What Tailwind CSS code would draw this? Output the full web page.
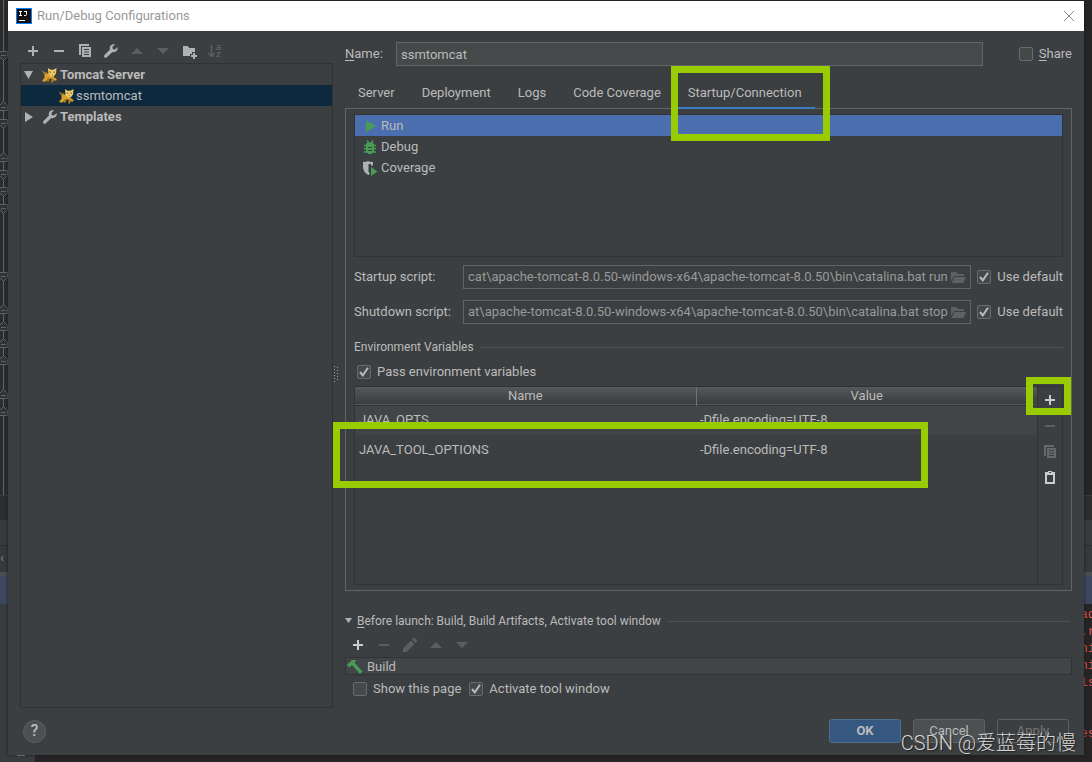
<!DOCTYPE html>
<html lang="en">
<head>
    <meta charset="UTF-8">
    <meta name="viewport" content="width=device-width, initial-scale=1.0">
    <title>Run/Debug Configurations</title>
    <script src="https://cdn.jsdelivr.net/npm/@tailwindcss/browser@4"></script>
</head>
<body class="bg-[#2b2b2b] text-[#bbbbbb] text-[13px] leading-5 font-[Roboto,'Noto_Sans_CJK_SC',sans-serif]">
    <!-- Shared icons -->
    <svg class="hidden">
        <symbol id="plus" viewBox="0 0 16 16"><path fill="currentColor" d="M7 3h2v4h4v2H9v4H7V9H3V7h4z"/></symbol>
        <symbol id="minus" viewBox="0 0 16 16"><path fill="currentColor" d="M3 7h10v2H3z"/></symbol>
        <symbol id="copy" viewBox="0 0 16 16"><path fill="currentColor" d="M2 1h10v2H4v9H2z"/><path fill="currentColor" fill-rule="evenodd" d="M5 4h9v10H5zM7 6v1h5V6zM7 8.500v1h5v-1zM7 11v1h5v-1z"/></symbol>
        <symbol id="wrench" viewBox="0 0 16 16"><path fill="currentColor" d="M14.600 3.900 12 6.500 9.800 6.100 9.400 4 12 1.400C10.300.900 8.400 1.300 7.400 2.800 6.600 4 6.600 5.300 7 6.500L1.500 12a1.600 1.600 0 0 0 0 2.300 1.600 1.600 0 0 0 2.300 0L9.400 8.900c1.400.500 2.900.200 4-.800 1.200-1.100 1.600-2.700 1.200-4.200z"/></symbol>
        <symbol id="up" viewBox="0 0 16 16"><path fill="currentColor" d="M2 11 8 5l6 6z"/></symbol>
        <symbol id="down" viewBox="0 0 16 16"><path fill="currentColor" d="M2 5h12l-6 6z"/></symbol>
        <symbol id="paste" viewBox="0 0 16 16"><path fill="currentColor" fill-rule="evenodd" d="M3 2h3V1h4v1h3v12H3zM5 5v7h6V5zM7 2v1h2V2z"/></symbol>
        <symbol id="folder" viewBox="0 0 16 16"><path fill="currentColor" d="M1 3h5l2 2h6v2H4L1 12z"/><path fill="currentColor" d="M4.500 8H16l-2.500 6H1.500z"/></symbol>
        <symbol id="check" viewBox="0 0 14 14"><path fill="none" stroke="#bbbbbb" stroke-width="2" d="M3 7l2.800 3.300L11 2.800"/></symbol>
        <symbol id="cat" viewBox="0 0 16 16">
            <path fill="none" stroke="#a8791d" stroke-width="1.300" d="M5 6H2L.700 4"/>
            <path fill="#d9a02c" d="M2.500 6.500 8 6.500l3 3 3.500 2.500v1.500h-3L9 11.500 6 12l-2.500 2.500H.500V13l2-2z"/>
            <path fill="#b5801d" d="M5.500 11h2L7 14.500H4.800zM10 11l2 1-1 3.500H9z"/>
            <path fill="#f0cc6b" d="M6 1 8.500 2.700h3L14.500 1l-.500 5.500-2.300 3h-2.500L6.500 7z"/>
            <path fill="#7a5312" d="M7.800 4.500h1.300v1.200H7.800zM11.500 4.500h1.300v1.200h-1.300zM9.600 7.500h1.600l-.800.900z"/>
        </symbol>
        <symbol id="fold-down" viewBox="0 0 9 11"><path fill="#313335" stroke="#606366" d="M-.500.500h8v5l-4 4-4-4z"/><path stroke="#606366" d="M1 4.500h5"/></symbol>
        <symbol id="fold-up" viewBox="0 0 9 11"><path fill="#313335" stroke="#606366" d="M-.500 9.500h8v-5l-4-4-4 4z"/><path stroke="#606366" d="M1 6.500h5"/></symbol>
    </svg>

    <div class="relative min-h-screen flex flex-col overflow-hidden">
        <!-- IDE window behind the dialog -->
        <div class="absolute inset-0 flex flex-col" aria-hidden="true">
            <div class="h-[495px] flex justify-between">
                <svg class="w-2 h-full bg-[#2b2c2d]" fill="none">
                    <path stroke="#606366" d="M3.500 0v495"/>
                    <use href="#fold-down" y="51" width="9" height="11"/>
                    <use href="#fold-up" y="101" width="9" height="11"/>
                    <use href="#fold-down" y="119" width="9" height="11"/>
                    <use href="#fold-up" y="152" width="9" height="11"/>
                    <use href="#fold-down" y="170" width="9" height="11"/>
                    <use href="#fold-down" y="187" width="9" height="11"/>
                    <use href="#fold-down" y="204" width="9" height="11"/>
                    <use href="#fold-down" y="272" width="9" height="11"/>
                    <use href="#fold-up" y="304" width="9" height="11"/>
                    <use href="#fold-up" y="321" width="9" height="11"/>
                    <use href="#fold-up" y="338" width="9" height="11"/>
                    <use href="#fold-up" y="355" width="9" height="11"/>
                    <use href="#fold-up" y="389" width="9" height="11"/>
                    <use href="#fold-up" y="406" width="9" height="11"/>
                </svg>
                <div class="w-2 bg-[#252525]"></div>
            </div>
            <div class="h-[25px] bg-[#2d2d2d] border-t border-[#3a3a3a]"></div>
            <div class="h-[25px] bg-[#383b3d]"></div>
            <div class="h-[27px] bg-[#36383a] border-t border-[#2b2b2b] text-[#888888] leading-6">‹</div>
            <div class="h-1 bg-[#4a4d4f]"></div>
            <div class="h-7 bg-[#3d4860]"></div>
            <div class="flex-1 flex justify-between bg-[#262424]">
                <div class="w-[35px] bg-[#393c3e] flex items-end justify-end pb-1.5 pr-2.5"><div class="w-2 h-2 bg-[#999999]"></div></div>
                <div class="flex-1 self-end pl-[15px] pb-1 text-xs leading-4 text-[#999999]">快到</div>
                <pre class="w-3 overflow-hidden text-[#d9534f] text-[13px] leading-[17px] pt-0.5 font-['Liberation_Mono',monospace]">ad
.r
ni
ni
is


es</pre>
            </div>
        </div>

        <!-- Dialog -->
        <div class="relative flex-1 mx-2 mt-px mb-[7px] flex flex-col bg-[#3c3f41] shadow-[0_0_3px_#1b1b1b]">
            <header class="h-[30px] bg-white flex items-center pl-2 pr-[9px]">
                <svg class="size-4" viewBox="0 0 16 16">
                    <path fill="#087cfa" d="M0 0h16v16H0z"/>
                    <path fill="#111111" d="M1 1h14v14H1z"/>
                    <path fill="none" stroke="#ffffff" d="M3 3.500h3M4.500 3v5M3 7.500h3M8 3.500h3M10.500 3v3.500q0 1-1 1H8M3 12.500h6"/>
                </svg>
                <h1 class="ml-[5px] flex-1 text-[#999999]">Run/Debug Configurations</h1>
                <button class="size-3" aria-label="Close">
                    <svg class="size-3" viewBox="0 0 12 12" fill="none" stroke="#888888"><path d="M1 1l10 10M11 1 1 11"/></svg>
                </button>
            </header>

            <main class="flex-1 flex pl-3 pr-3">
                <!-- Configuration tree -->
                <section class="w-[313px] shrink-0 flex flex-col pt-2">
                    <div class="h-6 flex">
                        <button class="w-[26px] grid place-items-center text-[#afb1b3]" aria-label="Add"><svg class="size-4"><use href="#plus"/></svg></button>
                        <button class="w-[26px] grid place-items-center text-[#afb1b3]" aria-label="Remove"><svg class="size-4"><use href="#minus"/></svg></button>
                        <button class="w-[26px] grid place-items-center text-[#afb1b3]" aria-label="Copy"><svg class="size-4"><use href="#copy"/></svg></button>
                        <button class="w-[26px] grid place-items-center text-[#afb1b3]" aria-label="Edit templates"><svg class="size-4"><use href="#wrench"/></svg></button>
                        <button class="w-[26px] grid place-items-center text-[#5b5d5f]" aria-label="Move up" disabled><svg class="size-4"><use href="#up"/></svg></button>
                        <button class="w-[26px] grid place-items-center text-[#5b5d5f]" aria-label="Move down" disabled><svg class="size-4"><use href="#down"/></svg></button>
                        <button class="w-[26px] grid place-items-center text-[#afb1b3]" aria-label="New folder">
                            <svg class="size-4" viewBox="0 0 16 16"><path fill="currentColor" d="M2 3h4.500l2 2H14v4h-3v2H9v2H2z"/><path fill="currentColor" d="M12 10h2v2h2v2h-2v2h-2v-2h-2v-2h2z"/></svg>
                        </button>
                        <button class="w-[26px] grid place-items-center text-[#5b5d5f]" aria-label="Sort" disabled>
                            <svg class="size-4" viewBox="0 0 16 16" fill="none" stroke="currentColor"><path stroke-width="1.500" d="M4.500 2v11M1.500 10l3 3.500 3-3.500"/><path stroke-width="1.200" d="M9.500 2.500h3.500v4H10v-2h3M9.500 9.500h3.500l-3 4h3.500"/></svg>
                        </button>
                    </div>
                    <ul class="flex-1 border border-[#323232]">
                        <li class="h-[21px] flex items-center font-bold pl-0.5">
                            <svg class="w-3 h-3 mr-[7px] text-[#afb1b3]" viewBox="0 0 12 12"><path fill="currentColor" d="M1 2h9l-4.500 8z"/></svg>
                            <svg class="size-4 mr-0.5"><use href="#cat"/></svg>Tomcat Server
                        </li>
                        <li class="h-[21px] flex items-center bg-[#0d293e] pl-[38px]">
                            <svg class="size-4 mr-px"><use href="#cat"/></svg>ssmtomcat
                        </li>
                        <li class="h-[21px] flex items-center font-bold pl-0.5">
                            <svg class="w-3 h-3 mr-[7px] text-[#afb1b3]" viewBox="0 0 12 12"><path fill="currentColor" d="M2 1l8 5-8 5z"/></svg>
                            <svg class="size-4 mr-0.5 text-[#afb1b3]"><use href="#wrench"/></svg>Templates
                        </li>
                    </ul>
                </section>

                <!-- Splitter -->
                <div class="w-3 shrink-0 flex items-center pl-px pt-2">
                    <svg class="w-1 h-4" viewBox="0 0 4 16" fill="none" stroke="#a0a0a0"><path stroke-dasharray="1 2" d="M.500 0v16M3.500 1v15"/></svg>
                </div>

                <!-- Settings -->
                <section class="flex-1 min-w-0 flex flex-col pt-[11px] pb-[9px]">
                    <div class="h-6 flex items-center">
                        <label for="name" class="w-[51px]"><span class="underline underline-offset-2">N</span>ame:</label>
                        <input id="name" type="text" value="ssmtomcat" class="flex-1 min-w-0 h-6 px-1 bg-[#45494a] border border-[#646464] mr-9">
                        <label class="flex items-center gap-1.5">
                            <input type="checkbox" class="appearance-none size-3.5 rounded-xs border border-[#6b6b6b] bg-[#43494a]">
                            <span><span class="underline underline-offset-2">S</span>hare</span>
                        </label>
                    </div>

                    <nav class="mt-[11px] h-8 -mb-px flex gap-px relative z-10">
                        <button class="px-[13px] pt-0.5 border-b-2 border-transparent">Server</button>
                        <button class="px-[13px] pt-0.5 border-b-2 border-transparent">Deployment</button>
                        <button class="px-[13px] pt-0.5 border-b-2 border-transparent">Logs</button>
                        <button class="px-[13px] pt-0.5 border-b-2 border-transparent">Code Coverage</button>
                        <button class="relative px-[13px] pt-0.5 border-b-2 border-[#3e7dc4]">
                            Startup/Connection
                            <span class="absolute -left-1 -top-[11px] w-[159px] h-[75px] border-7 border-[#99cc00] pointer-events-none"></span>
                        </button>
                    </nav>

                    <div class="flex-1 flex flex-col border border-[#646464] px-2 py-[5px]">
                        <ul class="h-[143px] border border-[#323232]">
                            <li class="h-[21px] flex items-center gap-[3px] pl-[7px] bg-[#4b6eaf]">
                                <svg class="size-4" viewBox="0 0 16 16"><path fill="#499c54" d="M4 2.500 14 8 4 14z"/></svg>Run
                            </li>
                            <li class="h-[21px] flex items-center gap-[3px] pl-[7px]">
                                <svg class="size-4" viewBox="0 0 16 16"><path fill="none" stroke="#499c54" stroke-width="1.300" d="M5 1.500l2 2.500M11 1.500 9 4M2 6.500h12M2 9.500h12M2 13h12"/><path fill="#499c54" d="M5 3.500h6l1 2V12l-2.500 3h-3L4 12V5.500z"/><path stroke="#3c3f41" d="M6 8.500h4M6 11.500h4"/></svg>Debug
                            </li>
                            <li class="h-[21px] flex items-center gap-[3px] pl-[7px]">
                                <svg class="size-4" viewBox="0 0 16 16"><path fill="#afb1b3" fill-rule="evenodd" d="M1 2q3.500 0 5-1 1.500 1 5 1v3.500L9 5.500V4H6.500v8L8 13.500 6.500 15Q1 12 1 7z"/><path fill="#499c54" d="M9 7l6.500 4.500L9 16z"/></svg>Coverage
                            </li>
                        </ul>

                        <div class="mt-2 h-6 flex items-center">
                            <label for="startup" class="w-[109px]">Startup script:</label>
                            <div class="flex-1 min-w-0 h-6 flex items-center border border-[#646464] px-1">
                                <input id="startup" type="text" disabled class="flex-1 min-w-0 text-[#999999]" value="cat\apache-tomcat-8.0.50-windows-x64\apache-tomcat-8.0.50\bin\catalina.bat run">
                                <button class="text-[#5e6163]" aria-label="Browse" disabled><svg class="size-4"><use href="#folder"/></svg></button>
                            </div>
                            <label class="relative flex items-center gap-1.5 ml-1.5">
                                <input type="checkbox" checked class="appearance-none size-3.5 rounded-xs border border-[#6b6b6b] bg-[#43494a]">
                                <svg class="absolute left-0 size-3.5"><use href="#check"/></svg>
                                Use default
                            </label>
                        </div>
                        <div class="mt-[11px] h-6 flex items-center">
                            <label for="shutdown" class="w-[109px]">Shutdown script:</label>
                            <div class="flex-1 min-w-0 h-6 flex items-center border border-[#646464] px-1">
                                <input id="shutdown" type="text" disabled class="flex-1 min-w-0 text-[#999999]" value="at\apache-tomcat-8.0.50-windows-x64\apache-tomcat-8.0.50\bin\catalina.bat stop">
                                <button class="text-[#5e6163]" aria-label="Browse" disabled><svg class="size-4"><use href="#folder"/></svg></button>
                            </div>
                            <label class="relative flex items-center gap-1.5 ml-1.5">
                                <input type="checkbox" checked class="appearance-none size-3.5 rounded-xs border border-[#6b6b6b] bg-[#43494a]">
                                <svg class="absolute left-0 size-3.5"><use href="#check"/></svg>
                                Use default
                            </label>
                        </div>

                        <div class="mt-[15px] h-4 flex items-center gap-1.5 text-xs">
                            <h2>Environment Variables</h2>
                            <div class="flex-1 h-px bg-[#515151]"></div>
                        </div>
                        <label class="relative mt-[7px] h-5 flex items-center gap-1.5 pl-[3px]">
                            <input type="checkbox" checked class="appearance-none size-3.5 rounded-xs border border-[#6b6b6b] bg-[#43494a]">
                            <svg class="absolute left-[3px] size-3.5"><use href="#check"/></svg>
                            Pass environment variables
                        </label>

                        <div class="relative mt-1 flex-1 flex border border-[#323232]">
                            <div class="flex-1 min-w-0">
                                <table class="w-full table-fixed border-collapse">
                                    <thead>
                                        <tr class="h-[18px] bg-linear-to-b from-[#55595b] to-[#3a3d3f] border-b border-[#323232] leading-4">
                                            <th class="font-normal p-0 border-r border-[#707374]">Name</th>
                                            <th class="font-normal p-0">Value</th>
                                        </tr>
                                    </thead>
                                    <tbody>
                                        <tr class="h-[30px] bg-[#414547]">
                                            <td class="py-0 px-1">JAVA_OPTS</td>
                                            <td class="py-0 px-1">-Dfile.encoding=UTF-8</td>
                                        </tr>
                                        <tr class="h-[30px]">
                                            <td class="py-0 px-1">JAVA_TOOL_OPTIONS</td>
                                            <td class="py-0 px-1">-Dfile.encoding=UTF-8</td>
                                        </tr>
                                    </tbody>
                                </table>
                            </div>
                            <div class="w-[25px] border-l border-[#323232] flex flex-col">
                                <button class="relative h-[26px] grid place-items-center text-[#cccccc]" aria-label="Add variable">
                                    <svg class="size-4"><use href="#plus"/></svg>
                                    <span class="absolute -left-3 -top-2.5 w-[45px] h-[38px] border-7 border-[#99cc00] pointer-events-none"></span>
                                </button>
                                <button class="h-[26px] grid place-items-center text-[#5b5d5f]" aria-label="Remove variable" disabled><svg class="size-4"><use href="#minus"/></svg></button>
                                <button class="h-[26px] grid place-items-center text-[#66686a]" aria-label="Copy variables" disabled><svg class="size-4"><use href="#copy"/></svg></button>
                                <button class="h-[26px] grid place-items-center text-[#cccccc]" aria-label="Paste variables"><svg class="size-4"><use href="#paste"/></svg></button>
                            </div>
                            <span class="absolute -left-[22px] top-[35px] w-[595px] h-[66px] border-7 border-[#99cc00] pointer-events-none"></span>
                        </div>
                    </div>

                    <!-- Before launch -->
                    <div class="mt-[22px] h-4 flex items-center text-xs pr-0.5">
                        <svg class="w-3 h-2" viewBox="0 0 12 8"><path fill="#afb1b3" d="M0 1h7L3.500 6z"/></svg>
                        <h2><span class="underline underline-offset-2">B</span>efore launch: Build, Build Artifacts, Activate tool window</h2>
                        <div class="ml-1.5 flex-1 h-px bg-[#515151]"></div>
                    </div>
                    <div class="mt-1 h-6 flex">
                        <button class="w-[26px] grid place-items-center text-[#cccccc]" aria-label="Add task"><svg class="size-4"><use href="#plus"/></svg></button>
                        <button class="w-[26px] grid place-items-center text-[#5b5d5f]" aria-label="Remove task" disabled><svg class="size-4"><use href="#minus"/></svg></button>
                        <button class="w-[26px] grid place-items-center text-[#5b5d5f]" aria-label="Edit task" disabled>
                            <svg class="size-4" viewBox="0 0 16 16"><path fill="currentColor" d="M1 15v-3.500L9 3.500 12.500 7l-8 8zM10 2.500l1.500-1.500h1.500L15 3v1.500L13.500 6z"/></svg>
                        </button>
                        <button class="w-[26px] grid place-items-center text-[#5b5d5f]" aria-label="Move task up" disabled><svg class="size-4"><use href="#up"/></svg></button>
                        <button class="w-[26px] grid place-items-center text-[#5b5d5f]" aria-label="Move task down" disabled><svg class="size-4"><use href="#down"/></svg></button>
                    </div>
                    <div class="h-[18px] pt-0.5 flex items-center gap-1 pl-px border border-[#323232] bg-[#414547]">
                        <svg class="size-4" viewBox="0 0 16 16"><path fill="#499c54" d="M0 6l5-5h4v1L7.500 3.500 15.500 12.500 13 15 5 6 2.500 8.500z"/></svg>Build
                    </div>
                    <div class="mt-1 h-5 flex items-center gap-2 pl-2">
                        <label class="flex items-center gap-1.5">
                            <input type="checkbox" class="appearance-none size-3.5 rounded-xs border border-[#6b6b6b] bg-[#43494a]">
                            Show this page
                        </label>
                        <label class="relative flex items-center gap-1.5">
                            <input type="checkbox" checked class="appearance-none size-3.5 rounded-xs border border-[#6b6b6b] bg-[#43494a]">
                            <svg class="absolute left-0 size-3.5"><use href="#check"/></svg>
                            Activate tool window
                        </label>
                    </div>
                </section>
            </main>

            <footer class="h-[47px] pb-px flex items-center gap-3 px-[15px]">
                <button class="size-[23px] rounded-full bg-[#4c5052] border border-[#5e6060] text-base leading-5 font-medium mr-auto" aria-label="Help">?</button>
                <button class="w-[72px] h-6 rounded-[3px] bg-[#365880] border border-[#4c708c] font-bold">OK</button>
                <button class="w-[72px] h-6 rounded-[3px] bg-[#4c5052] border border-[#5e6060]">Cancel</button>
                <button class="w-[72px] h-6 rounded-[3px] border border-[#5e6060] text-[#777777]" disabled>Apply</button>
            </footer>
        </div>

        <p class="absolute right-4 bottom-[3px] text-xl leading-8 text-[#d6d6d6] font-light [text-shadow:1px_1px_1px_#222222]">CSDN @爱蓝莓的慢</p>
    </div>
</body>
</html>
